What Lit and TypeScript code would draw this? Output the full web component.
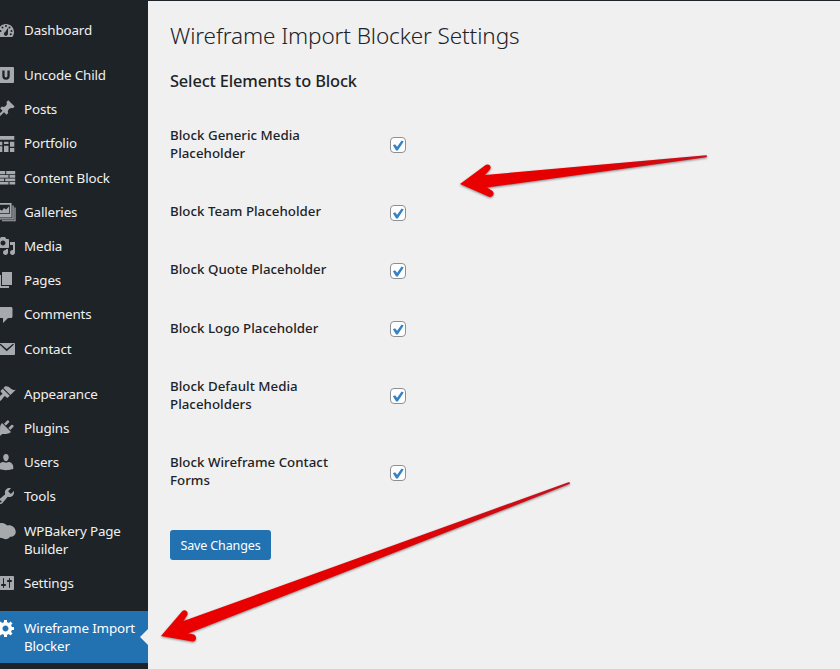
import { LitElement, html, css, svg } from "lit";
import { customElement } from "lit/decorators.js";

const P = (d: string) => svg`<path fill-rule="evenodd" d=${d}></path>`;

const icons: Record<string, unknown> = {
  dashboard: P("M3.76 17h12.48C17.34 15.63 18 13.9 18 12c0-4.41-3.58-8-8-8s-8 3.59-8 8c0 1.9.66 3.63 1.76 5zM10 5a1 1 0 1 1 0 2a1 1 0 0 1 0-2zM6.5 6.5a1 1 0 1 1 0 2a1 1 0 0 1 0-2zM13.5 6.5a1 1 0 1 1 0 2a1 1 0 0 1 0-2zM4.5 10a1 1 0 1 1 0 2a1 1 0 0 1 0-2zM15.5 10a1 1 0 1 1 0 2a1 1 0 0 1 0-2zM12.2 7.5L11.9 13.5A2 2 0 1 1 9.2 12zM14.8 13.2a1 1 0 1 1 0 2a1 1 0 0 1 0-2z"),
  uncode: P("M3 2h14a1 1 0 0 1 1 1v14a1 1 0 0 1-1 1H3a1 1 0 0 1-1-1V3a1 1 0 0 1 1-1zM6.3 5.5V11a3.7 3.7 0 0 0 7.4 0V5.5H11.4V11a1.4 1.4 0 0 1-2.8 0V5.5z"),
  posts: P("M10.44 3.02l1.82-1.82 6.36 6.35-1.83 1.82c-1.05-.68-2.48-.57-3.41.36l-.75.75c-.92.93-1.04 2.35-.35 3.41l-1.83 1.82-2.41-2.41-2.8 2.79c-.42.42-3.38 2.71-3.8 2.29s1.86-3.39 2.28-3.81l2.79-2.79L4.1 9.36l1.83-1.82c1.05.69 2.48.57 3.4-.36l.75-.75c.93-.92 1.05-2.35.36-3.41z"),
  portfolio: P("M2 2h16.3v3.7H2zM2 7.7h4.3v3.5H2zM8 7.7h4.5v2.3H8zM14 7.7h4.3v5H14zM2 12.2h4.3V18H2zM8 11.7h4.5v6.3H8zM14 14h4.3v4H14z"),
  blocks: P("M2 2.9h7.2v3.3H2zM10.2 2.9h9v3.3h-9zM2 7.1h10.5v2.6H2zM13.5 7.1h5.7v2.6h-5.7zM2 10.6h6.2v2.6H2zM9.2 10.6h10v2.6h-10zM2 14.1h10.5v2.3H2zM13.5 14.1h5.7v2.3h-5.7z"),
  galleries: P("M1 1h14.6v14.5H1zM2.8 2.8v9.3h11V2.8zM4 11.2V7.5l2 1.3 2-2.8 2 1.5 3-3v6.7zM16.4 3.5H17.7V17.5H4v-1.2h12.4zM18.4 5.5H19.6V19.3H6v-1.1h12.4z"),
  media: P("M13 11V4c0-.55-.45-1-1-1h-1.67L9 1H5L3.67 3H2c-.55 0-1 .45-1 1v7c0 .55.45 1 1 1h10c.55 0 1-.45 1-1zM7 4.5c1.38 0 2.5 1.12 2.5 2.5S8.38 9.5 7 9.5 4.5 8.38 4.5 7 5.62 4.5 7 4.5zM14 6h5v10.5c0 1.38-1.12 2.5-2.5 2.5S14 17.88 14 16.5s1.12-2.5 2.5-2.5c.17 0 .34.02.5.05V9h-3V6zm-4 8.05V13h2v3.5c0 1.38-1.12 2.5-2.5 2.5S7 17.88 7 16.5 8.12 14 9.5 14c.17 0 .34.02.5.05z"),
  pages: P("M6 15V2h10v13H6zm-1 1h8v2H3V5h2v11z"),
  comments: P("M5 2h10c.9 0 1.5.6 1.5 1.5V11.5c0 .9-.6 1.5-1.5 1.5h-3l-5 5v-5H5c-1.1 0-2-.9-2-2V4c0-1.1.9-2 2-2z"),
  contact: P("M3.5 4h14.5a1 1 0 0 1 1 1v10a1 1 0 0 1-1 1H3.5a1 1 0 0 1-1-1V5a1 1 0 0 1 1-1zM3.5 5.5L10.7 12.2 18 5.5 17 4.7 10.7 10.1 4.5 4.7z"),
  appearance: P("M14.48 11.06L7.41 3.99l1.5-1.5c.5-.56 2.3-.47 3.51.32 1.21.8 1.43 1.28 2.91 2.1 1.18.64 2.45 1.26 4.45.85zm-.71.71L6.7 4.7 4.93 6.47c-.39.39-.39 1.02 0 1.41l1.06 1.06c.39.39.39 1.03 0 1.42-.6.6-1.43 1.11-2.21 1.69-.35.26-.7.53-1.01.84C1.43 14.23.4 16.08 1.4 17.07c.99 1 2.84-.03 4.18-1.36.31-.31.58-.66.85-1.02.57-.78 1.08-1.61 1.69-2.21.39-.39 1.02-.39 1.41 0l1.06 1.06c.39.39 1.02.39 1.41 0z"),
  plugins: P("M13.11 4.36L9.87 7.6 8 5.73l3.24-3.24c.35-.34 1.05-.2 1.56.32.52.51.66 1.21.31 1.55zm-8 1.77l.91-1.12 9.01 9.01-1.19.84c-.71.71-2.63 1.16-3.82 1.16H6.14L4.9 17.26c-.59.59-1.54.59-2.12 0-.59-.58-.59-1.53 0-2.12l1.24-1.24v-3.88c0-1.13.4-3.19 1.09-3.89zm7.26 3.97l3.24-3.24c.34-.35 1.04-.21 1.55.31.52.51.66 1.21.31 1.55l-3.24 3.25z"),
  users: P("M10 9.25c-2.27 0-2.73-3.44-2.73-3.44C7 4.02 7.82 2 9.97 2c2.16 0 2.98 2.02 2.71 3.81 0 0-.41 3.44-2.68 3.44zm0 1.57L12.72 10c2.39 0 4.52 2.33 4.52 4.53v2.49s-3.65 1.13-7.24 1.13c-3.65 0-7.24-1.13-7.24-1.13v-2.49c0-2.25 1.94-4.48 4.47-4.48z"),
  tools: P("M16.68 9.77c-1.34 1.34-3.3 1.67-4.95.99l-5.41 6.52c-.99.99-2.59.99-3.58 0s-.99-2.59 0-3.57l6.52-5.42c-.68-1.65-.35-3.61.99-4.95 1.28-1.28 3.12-1.62 4.72-1.06l-2.89 2.89 2.82 2.82 2.86-2.87c.53 1.58.18 3.39-1.08 4.65zM3.81 16.21c.4.39 1.04.39 1.43 0 .4-.4.4-1.04 0-1.43-.39-.4-1.03-.4-1.43 0-.39.39-.39 1.03 0 1.43z"),
  bakery: P("M2 3.5C5 1 9 2 11 4.5C15 3.5 19.5 6 19.7 10.5C20 14 17 16 14 15.7C13 18 9 19 7 17.3C4 17.5 2 16 1 14z"),
  settings: P("M18 16V4c0-.55-.45-1-1-1H3c-.55 0-1 .45-1 1v12c0 .55.45 1 1 1h14c.55 0 1-.45 1-1zM8 11h1c.55 0 1 .45 1 1s-.45 1-1 1H8v1.5c0 .28-.22.5-.5.5s-.5-.22-.5-.5V13H6c-.55 0-1-.45-1-1s.45-1 1-1h1V5.5c0-.28.22-.5.5-.5s.5.22.5.5V11zm5-2h-1c-.55 0-1-.45-1-1s.45-1 1-1h1V5.5c0-.28.22-.5.5-.5s.5.22.5.5V7h1c.55 0 1 .45 1 1s-.45 1-1 1h-1v5.5c0 .28-.22.5-.5.5s-.5-.22-.5-.5V9z"),
  gear: P("M18 12h-2.18c-.17.7-.44 1.35-.81 1.93l1.54 1.54-2.1 2.1-1.54-1.54c-.58.36-1.23.63-1.91.79V19H8v-2.18c-.68-.16-1.33-.43-1.91-.79l-1.54 1.54-2.12-2.12 1.54-1.54c-.36-.58-.63-1.23-.79-1.91H1V9.03h2.17c.16-.7.44-1.35.8-1.94L2.43 5.55l2.1-2.1 1.54 1.54c.58-.37 1.24-.64 1.93-.81V2h3v2.18c.68.16 1.33.43 1.91.79l1.54-1.54 2.12 2.12-1.54 1.54c.36.59.64 1.24.8 1.94H18V12zm-8.5 1.5c1.66 0 3-1.34 3-3s-1.34-3-3-3-3 1.34-3 3 1.34 3 3 3z"),
};

/* [icon, label lines, first of its group] */
const menu: [string, string[], boolean?][] = [
  ["dashboard", ["Dashboard"]],
  ["uncode", ["Uncode Child"], true],
  ["posts", ["Posts"]],
  ["portfolio", ["Portfolio"]],
  ["blocks", ["Content Block"]],
  ["galleries", ["Galleries"]],
  ["media", ["Media"]],
  ["pages", ["Pages"]],
  ["comments", ["Comments"]],
  ["contact", ["Contact"]],
  ["appearance", ["Appearance"], true],
  ["plugins", ["Plugins"]],
  ["users", ["Users"]],
  ["tools", ["Tools"]],
  ["bakery", ["WPBakery Page", "Builder"]],
  ["settings", ["Settings"]],
  ["gear", ["Wireframe Import", "Blocker"], true],
];

const options: string[][] = [
  ["Block Generic Media", "Placeholder"],
  ["Block Team Placeholder"],
  ["Block Quote Placeholder"],
  ["Block Logo Placeholder"],
  ["Block Default Media", "Placeholders"],
  ["Block Wireframe Contact", "Forms"],
];

const lines = (l: string[]) => l.map((t) => html`<span class="line">${t}</span>`);

@customElement("admin-menu")
export class AdminMenu extends LitElement {
  static styles = css`
    :host { display: block; background: #1d2327; padding-top: 13px; box-sizing: border-box; overflow: hidden; }
    .item { display: flex; position: relative; color: #f0f0f1; min-height: 34.2px; box-sizing: border-box;
      font-size: 13.4px; line-height: 18.2px; letter-spacing: -0.15px; }
    .first { margin-top: 10.85px; }
    .icon { width: 20px; height: 20px; flex: none; margin: 7.1px 8px 0 -4px; fill: #a7aaad; }
    .label { padding: 8px 0; }
    .line { display: block; white-space: nowrap; }
    .active { background: #2271b1; color: #fff; }
    .active .icon { fill: #fff; }
    .active::after { content: ""; position: absolute; right: 0; top: 18px; border: 8px solid transparent; border-right-color: #f0f0f1; border-left: 0; }
  `;
  render() {
    return menu.map(([icon, label, first]) => html`
      <div class="item ${first ? "first" : ""} ${icon === "gear" ? "active" : ""}">
        <svg class="icon" viewBox="0 0 20 20">${icons[icon]}</svg>
        <div class="label">${lines(label)}</div>
      </div>`);
  }
}

@customElement("app-root")
export class AppRoot extends LitElement {
  static styles = css`
    :host { display: grid; grid-template-columns: 148px 1fr; position: relative; height: 669px; overflow: hidden;
      background: #f0f0f1; color: #1d2327; font-family: "Noto Sans", "Open Sans", sans-serif; }
    main { border-top: 1px solid #1d2327; padding: 19px 22px 0; }
    h1 { margin: 0; font-size: 22.5px; line-height: 32px; font-weight: 300; letter-spacing: -0.1px; white-space: nowrap; }
    h2 { margin: 17px 0 0; font-size: 16.4px; line-height: 24px; font-weight: 500; letter-spacing: -0.15px; white-space: nowrap; }
    .form { margin-top: 12.7px; }
    .row { display: grid; grid-template-columns: 220px 1fr; font-size: 13.3px; line-height: 18.2px; padding: 20px 0; min-height: 18.2px; }
    .label { font-weight: 500; letter-spacing: 0.02px; }
    .line { display: block; white-space: nowrap; }
    .cell { align-self: center; height: 16px; padding-top: 2.6px; margin-bottom: -0.4px; }
    .box { width: 16px; height: 16px; display: block; }
    button { margin: 20.3px 0 0; display: block; width: 101px; height: 30px; padding: 1px 0 0; border: 0; border-radius: 3px; background: #2271b1; color: #fff;
      font: 400 12.5px/29px "Noto Sans", sans-serif; letter-spacing: -0.13px; white-space: nowrap; }
    .arrows { position: absolute; inset: 0; width: 840px; height: 669px; filter: drop-shadow(0 1px 1px rgba(0, 0, 0, 0.45)); pointer-events: none; }
  `;
  render() {
    return html`
      <admin-menu></admin-menu>
      <main>
        <h1>Wireframe Import Blocker Settings</h1>
        <h2>Select Elements to Block</h2>
        <div class="form">
          ${options.map((o) => html`
            <div class="row">
              <div class="label">${lines(o)}</div>
              <div class="cell">
                <svg class="box" viewBox="0 0 16 16">
                  <rect x=".5" y=".5" width="15" height="15" rx="3.5" fill="#fff" stroke="#8c8f94"></rect>
                  <path d="M2.9 8.3l2.2-1.1 2 2.5 4.5-6.2 2.1 1-5.9 8.9h-1.7z" fill="#3582c4"></path>
                </svg>
              </div>
            </div>`)}
        </div>
        <button>Save Changes</button>
      </main>
      <svg class="arrows" viewBox="0 0 840 669">
        <defs>
          <linearGradient id="shade" x1="0" y1="0" x2="1" y2="0">
            <stop offset="0" stop-color="#ec0000"></stop>
            <stop offset=".5" stop-color="#e20000"></stop>
            <stop offset="1" stop-color="#c8101c"></stop>
          </linearGradient>
        </defs>
        <path fill="url(#shade)" d="M460 184L486 164.8Q489.500 163.500 490.500 166.500Q491 168.500 489.500 170L485 175L706 155.300Q708 156 706.500 157.300L487 187.500L492.500 191Q494.500 193 493 195.500Q491.500 197.500 489 196.800Z"></path>
        <path fill="url(#shade)" d="M161 636L182 611.500Q184 609.500 186.500 611Q188.500 613 187 615.500L183.500 621L568.500 482.200Q571 482.500 569.500 484L188 633.500L194 634.500Q196.500 636 196 639Q195 641.800 192.500 641.500Z"></path>
      </svg>`;
  }
}
